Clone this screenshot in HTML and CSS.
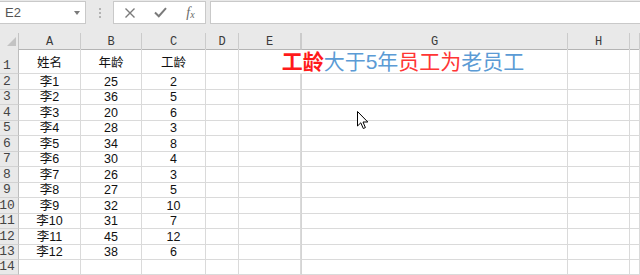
FILE: index.html
```html
<!DOCTYPE html>
<html lang="zh">
<head>
<meta charset="utf-8">
<title>工龄</title>
<link rel="stylesheet" href="styles.css">
</head>
<body>
<div class="app">
  <div class="toolbar">
    <div class="namebox"><span class="ref">E2</span><span class="drop"></span></div>
    <div class="grip"><i></i><i></i><i></i></div>
    <div class="fxbox">
      <span class="btn"><svg width="12" height="12" viewBox="0 0 12 12"><path d="M1.5 1.5 L10.5 10.5 M10.5 1.5 L1.5 10.5" stroke="#7a7a7a" stroke-width="1.4" fill="none"/></svg></span>
      <span class="btn"><svg width="13" height="11" viewBox="0 0 13 11"><path d="M1 5.5 L4.8 9.2 L12 1.2" stroke="#7a7a7a" stroke-width="2" fill="none"/></svg></span>
      <span class="btn fx">f<span class="x">x</span></span>
    </div>
    <div class="formula"></div>
  </div>

  <div class="sheet">
    <div class="row hdr">
      <div class="corner"></div>
      <div class="ch">A</div><div class="ch">B</div><div class="ch">C</div><div class="ch">D</div><div class="ch">E</div><div class="ch g">G</div><div class="ch">H</div><div class="ch"></div>
    </div>
    <div class="row r1">
      <div class="rh">1</div>
      <div class="c">姓名</div><div class="c">年龄</div><div class="c">工龄</div><div class="c"></div>
      <div class="c title"><b class="red">工龄</b><span class="blue">大于5年</span><span class="red2">员工为</span><span class="blue">老员工</span></div>
      <div class="c"></div><div class="c"></div>
    </div>
    <div class="row h16"><div class="rh">2</div><div class="c">李1</div><div class="c">25</div><div class="c">2</div><div class="c"></div><div class="c"></div><div class="c g"></div><div class="c"></div><div class="c"></div></div>
    <div class="row h15"><div class="rh">3</div><div class="c">李2</div><div class="c">36</div><div class="c">5</div><div class="c"></div><div class="c"></div><div class="c g"></div><div class="c"></div><div class="c"></div></div>
    <div class="row h16"><div class="rh">4</div><div class="c">李3</div><div class="c">20</div><div class="c">6</div><div class="c"></div><div class="c"></div><div class="c g"></div><div class="c"></div><div class="c"></div></div>
    <div class="row h15"><div class="rh">5</div><div class="c">李4</div><div class="c">28</div><div class="c">3</div><div class="c"></div><div class="c"></div><div class="c g"></div><div class="c"></div><div class="c"></div></div>
    <div class="row h16"><div class="rh">6</div><div class="c">李5</div><div class="c">34</div><div class="c">8</div><div class="c"></div><div class="c"></div><div class="c g"></div><div class="c"></div><div class="c"></div></div>
    <div class="row h15"><div class="rh">7</div><div class="c">李6</div><div class="c">30</div><div class="c">4</div><div class="c"></div><div class="c"></div><div class="c g"></div><div class="c"></div><div class="c"></div></div>
    <div class="row h16"><div class="rh">8</div><div class="c">李7</div><div class="c">26</div><div class="c">3</div><div class="c"></div><div class="c"></div><div class="c g"></div><div class="c"></div><div class="c"></div></div>
    <div class="row h15"><div class="rh">9</div><div class="c">李8</div><div class="c">27</div><div class="c">5</div><div class="c"></div><div class="c"></div><div class="c g"></div><div class="c"></div><div class="c"></div></div>
    <div class="row h16"><div class="rh">10</div><div class="c">李9</div><div class="c">32</div><div class="c">10</div><div class="c"></div><div class="c"></div><div class="c g"></div><div class="c"></div><div class="c"></div></div>
    <div class="row h15"><div class="rh">11</div><div class="c">李10</div><div class="c">31</div><div class="c">7</div><div class="c"></div><div class="c"></div><div class="c g"></div><div class="c"></div><div class="c"></div></div>
    <div class="row h16"><div class="rh">12</div><div class="c">李11</div><div class="c">45</div><div class="c">12</div><div class="c"></div><div class="c"></div><div class="c g"></div><div class="c"></div><div class="c"></div></div>
    <div class="row h15"><div class="rh">13</div><div class="c">李12</div><div class="c">38</div><div class="c">6</div><div class="c"></div><div class="c"></div><div class="c g"></div><div class="c"></div><div class="c"></div></div>
    <div class="row h15"><div class="rh">14</div><div class="c"></div><div class="c"></div><div class="c"></div><div class="c"></div><div class="c"></div><div class="c g"></div><div class="c"></div><div class="c"></div></div>

    <svg class="cursor" width="13" height="19" viewBox="0 0 13 19"><path d="M0.5 0.5 L0.5 15 L3.8 11.8 L6.3 17.5 L8.4 16.6 L6 11 L10.8 11 Z" fill="#fff" stroke="#000" stroke-width="1" stroke-linejoin="round"/></svg>
  </div>
</div>
</body>
</html>
```

FILE: styles.css
```css
* { box-sizing: border-box; }
html, body { margin: 0; padding: 0; background: #ffffff; }
.app { width: 640px; height: 275px; overflow: hidden; font-family: "Liberation Sans", "Noto Sans CJK SC", sans-serif; }

.toolbar {
  height: 33px;
  background: #e9e9e9;
  display: flex;
  align-items: flex-start;
  padding-top: 1px;
}
.namebox {
  width: 86px;
  height: 23px;
  background: #fff;
  border: 1px solid #c9c9c9;
  border-left: none;
  display: flex;
  align-items: center;
  justify-content: space-between;
  padding: 0 5px 0 5px;
}
.ref { font-size: 13px; color: #555; }
.drop {
  width: 0; height: 0;
  border-left: 3.5px solid transparent;
  border-right: 3.5px solid transparent;
  border-top: 4px solid #7a7a7a;
}
.grip {
  width: 27px;
  height: 23px;
  display: flex;
  flex-direction: column;
  align-items: center;
  justify-content: center;
  gap: 2px;
}
.grip i { display: block; width: 2px; height: 2px; background: #b3b3b3; }
.fxbox {
  width: 93px;
  height: 23px;
  background: #fff;
  border: 1px solid #c9c9c9;
  display: grid;
  grid-template-columns: 31px 31px 29px;
  align-items: center;
}
.btn { display: flex; justify-content: center; align-items: center; }
.fx { font-family: "Liberation Serif", serif; font-style: italic; font-size: 14px; color: #6a6a6a; }
.fx .x { font-size: 10px; margin-top: 4px; }
.formula {
  flex: 1;
  margin-left: 4px;
  height: 23px;
  background: #fff;
  border: 1px solid #c9c9c9;
  border-right: none;
}

.sheet { position: relative; }
.row {
  display: grid;
  grid-template-columns: 19px 62px 61px 64px 33px 62px 267px 62px 10px;
}
.hdr { height: 16px; }
.r1 { height: 25px; }
.h16 { height: 16px; }
.h15 { height: 15px; }

.corner {
  background: #e9e9e9;
  border-right: 1px solid #c4c4c4;
  border-bottom: 1px solid #b4b4b4;
  display: flex;
  justify-content: flex-end;
  align-items: flex-end;
  padding: 0 2px 3px 0;
}
.corner::after {
  content: "";
  width: 9px;
  height: 9px;
  background: #c3c3c3;
  clip-path: polygon(100% 0, 100% 100%, 0 100%);
}
.ch {
  background: #e9e9e9;
  border-right: 1px solid #cbcbcb;
  border-bottom: 1px solid #b4b4b4;
  font-family: "Liberation Mono", monospace;
  font-size: 12px;
  color: #3a3a3a;
  display: flex;
  justify-content: center;
  align-items: center;
  padding-top: 2px;
}
.ch.g { border-left: 1px solid #cbcbcb; }

.rh {
  background: #e9e9e9;
  border-right: 1px solid #bdbdbd;
  border-bottom: 1px solid #d2d2d2;
  font-family: "Liberation Mono", monospace;
  font-size: 13px;
  line-height: 13px;
  color: #444;
  display: flex;
  justify-content: center;
  align-items: flex-end;
  padding: 0 4px 1px 0;
  white-space: nowrap;
  overflow: visible;
}

.c {
  border-right: 1px solid #dadada;
  border-bottom: 1px solid #dadada;
  font-size: 12.5px;
  line-height: 14px;
  color: #111;
  display: flex;
  justify-content: center;
  align-items: flex-end;
  padding-bottom: 0;
  white-space: nowrap;
}
.r1 .c { padding-bottom: 3px; }
.c.g { border-left: 1px solid #d4d4d4; }

.title {
  grid-column: span 2;
  font-size: 21px;
  line-height: 21px;
  padding-bottom: 1px !important;
  letter-spacing: 0;
}
.red { color: #ff1a1a; font-weight: 700; }
.red2 { color: #ff3535; }
.blue { color: #5b9bd5; }

.cursor { position: absolute; left: 357px; top: 78px; }
```
